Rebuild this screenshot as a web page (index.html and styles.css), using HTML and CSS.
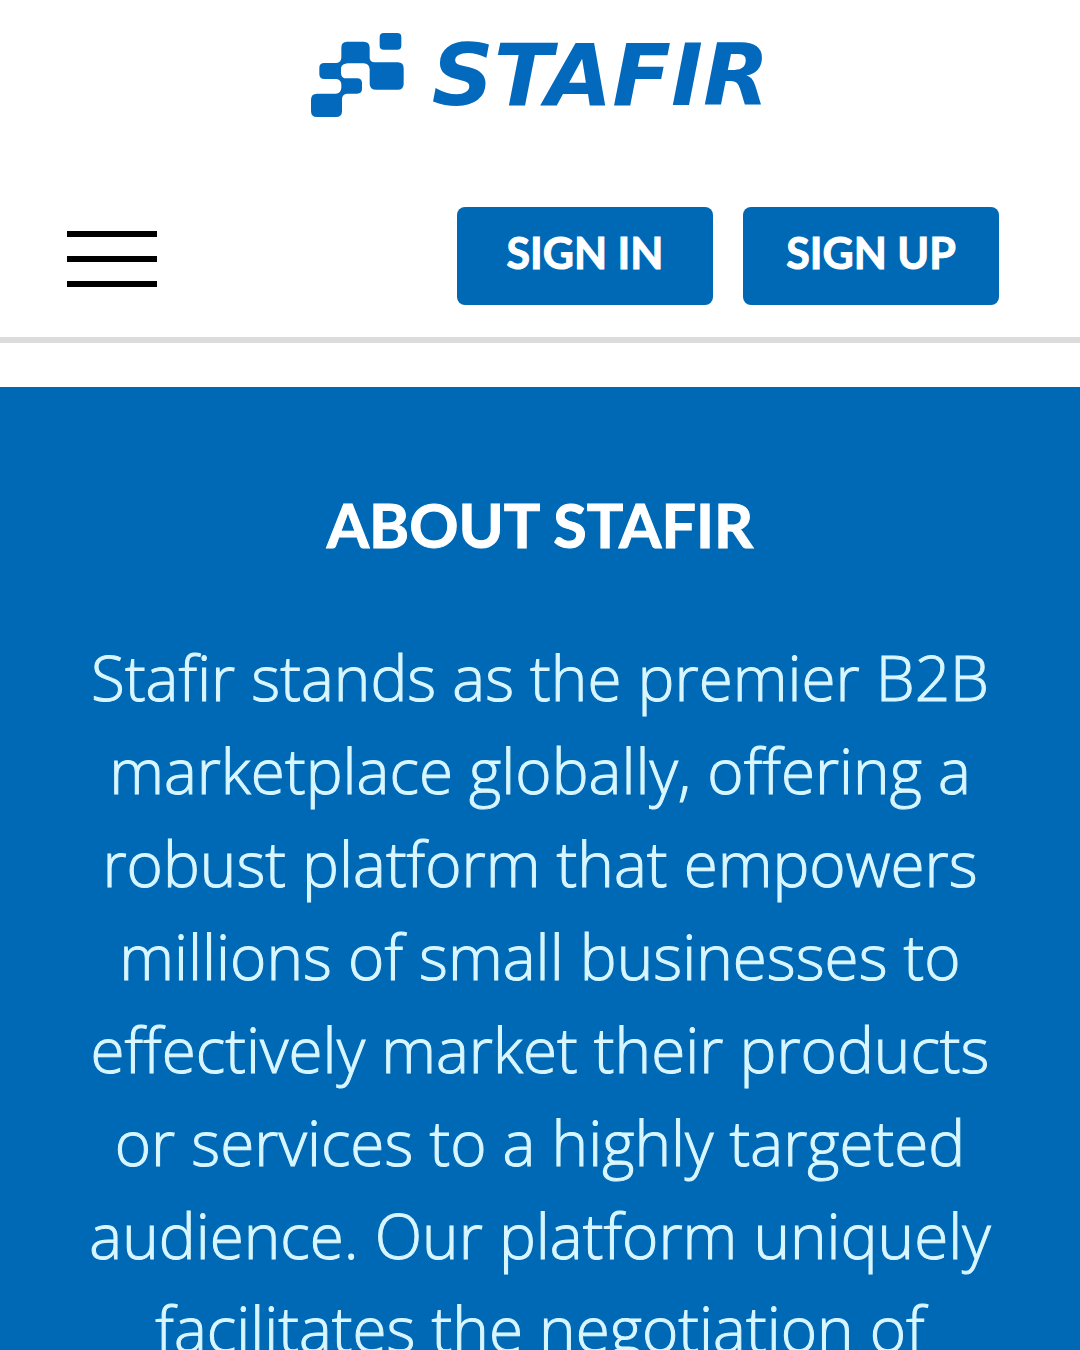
FILE: index.html
```html
<!DOCTYPE html>
<html lang="en">
<head>
    <meta charset="UTF-8">
    <meta name="viewport" content="width=device-width, initial-scale=1.0">
    <title>About Stafir</title>
    <link rel="stylesheet" href="styles.css">
</head>
<body>
    <header class="header">
        <a href="#" class="logo">
            <svg class="logo-mark" viewBox="0 0 279 252" aria-hidden="true">
                <rect x="206" y="0" width="65" height="50" rx="12"/>
                <path d="M108 26H158Q176 26 176 44V76Q178 88 190 88H260Q278 88 278 106V152Q278 170 260 170H196Q176 170 176 152V108Q174 92 158 91H110Q94 92 90 104V122Q92 136 106 136H138Q153 136 153 150V168Q153 182 138 182H108Q93 184 93 198V234Q93 252 75 252H18Q0 252 0 234V200Q0 182 18 182H74Q90 180 91 164V154Q90 140 76 138H40Q25 138 25 124V104Q25 90 40 90H76Q90 88 91 74V44Q91 26 108 26Z"/>
            </svg>
            <span class="logo-text">STAFIR</span>
        </a>
        <nav class="nav">
            <button type="button" class="menu" aria-label="Menu">
                <span class="menu-bar"></span>
                <span class="menu-bar"></span>
                <span class="menu-bar"></span>
            </button>
            <div class="actions">
                <a href="#" class="btn">SIGN IN</a>
                <a href="#" class="btn">SIGN UP</a>
            </div>
        </nav>
    </header>

    <main class="about">
        <h1 class="about-title">ABOUT STAFIR</h1>
        <p class="about-text">Stafir stands as the premier B2B marketplace globally, offering a robust platform that empowers millions of small businesses to effectively market their products or services to a highly targeted audience. Our platform uniquely facilitates the negotiation of</p>
    </main>
</body>
</html>
```

FILE: styles.css
```css
* {
    box-sizing: border-box;
}

body {
    margin: 0;
    background-color: #fff;
    font-family: "Open Sans", sans-serif;
}

/* Header */
.header {
    padding-top: 32px;
    border-bottom: 6px solid #dcdcdc;
}

.logo {
    display: flex;
    justify-content: center;
    align-items: center;
    gap: 28px;
    height: 86px;
    color: #0369bd;
    text-decoration: none;
}

.logo-mark {
    width: 93px;
    height: 84px;
    fill: #0369bd;
}

.logo-text {
    font-family: "DejaVu Sans", sans-serif;
    font-size: 86px;
    font-weight: bold;
    font-style: italic;
    line-height: 86px;
}

.nav {
    display: flex;
    justify-content: space-between;
    align-items: center;
    padding: 89px 81px 32px 67px;
}

.menu {
    display: flex;
    flex-direction: column;
    gap: 19px;
    width: 90px;
    padding: 6px 0 0;
    border: none;
    background: none;
    cursor: pointer;
}

.menu-bar {
    width: 100%;
    height: 6px;
    background-color: #000;
}

.actions {
    display: flex;
    gap: 30px;
}

.btn {
    width: 256px;
    height: 98px;
    border-radius: 8px;
    background-color: #0069b5;
    color: #fff;
    font-family: "Lato", sans-serif;
    font-size: 43px;
    font-weight: bold;
    line-height: 92px;
    text-align: center;
    text-decoration: none;
    -webkit-text-stroke: 1px #fff;
}

/* About */
.about {
    margin-top: 44px;
    padding: 92px 80px;
    background-color: #0069b5;
    text-align: center;
}

.about-title {
    margin: 0 0 60px;
    color: #fff;
    font-family: "Lato", sans-serif;
    font-size: 61px;
    font-weight: bold;
    line-height: 92px;
    -webkit-text-stroke: 1px #fff;
}

.about-text {
    margin: 0;
    color: #d8f6ff;
    font-size: 62px;
    font-weight: 300;
    line-height: 93px;
    -webkit-text-stroke: 1px #d8f6ff;
}
```
